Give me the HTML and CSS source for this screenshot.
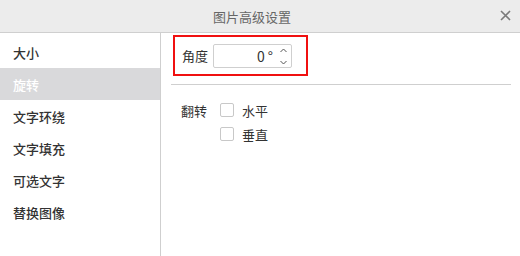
FILE: index.html
```html
<!DOCTYPE html>
<html lang="zh">
<head>
<meta charset="utf-8">
<link rel="stylesheet" href="styles.css">
</head>
<body>
<div class="dialog">
  <div class="header">
    <span class="title">图片高级设置</span>
    <span class="close"><svg width="11" height="11" viewBox="0 0 11 11"><path d="M1 1L10 10M10 1L1 10" stroke="#7a7a7a" stroke-width="1.6" fill="none"/></svg></span>
  </div>
  <div class="main">
    <ul class="nav">
      <li class="nav-item">大小</li>
      <li class="nav-item active">旋转</li>
      <li class="nav-item">文字环绕</li>
      <li class="nav-item">文字填充</li>
      <li class="nav-item">可选文字</li>
      <li class="nav-item">替换图像</li>
    </ul>
    <div class="content">
      <div class="angle-box">
        <span class="angle-label">角度</span>
        <div class="spin">
          <span class="spin-value">0 °</span>
          <span class="spin-arrows">
            <svg width="7" height="5" viewBox="0 0 7 5"><path d="M0.5 4L3.5 1L6.5 4" stroke="#555" stroke-width="1" fill="none"/></svg>
            <svg width="7" height="5" viewBox="0 0 7 5"><path d="M0.5 1L3.5 4L6.5 1" stroke="#555" stroke-width="1" fill="none"/></svg>
          </span>
        </div>
      </div>
      <div class="sep"></div>
      <div class="flip">
        <span class="flip-label">翻转</span>
        <div class="options">
          <label class="option"><span class="check"></span>水平</label>
          <label class="option"><span class="check"></span>垂直</label>
        </div>
      </div>
    </div>
  </div>
</div>
</body>
</html>
```
FILE: styles.css
```css
* { box-sizing: border-box; }
html, body { margin: 0; padding: 0; background: #fff; }
body {
  font-family: "Noto Sans CJK SC", "Noto Sans", sans-serif;
  color: #333;
  width: 520px;
  height: 256px;
  overflow: hidden;
}
.dialog { width: 520px; height: 256px; display: flex; flex-direction: column; }
.header {
  height: 33px;
  flex: none;
  background: #ececec;
  border-bottom: 1px solid #cfcfcf;
  display: flex;
  align-items: center;
  justify-content: center;
  position: relative;
  padding-right: 16px;
}
.title { font-size: 13px; color: #666; line-height: 1; }
.close {
  position: absolute;
  right: 9px;
  top: 10px;
  width: 11px;
  height: 11px;
  display: flex;
}
.main { flex: 1; display: flex; }
.nav {
  list-style: none;
  margin: 0;
  padding: 3px 0 0 0;
  width: 161px;
  flex: none;
  border-right: 1px solid #cfcfcf;
}
.nav-item {
  height: 32px;
  display: flex;
  align-items: center;
  padding-left: 13px;
  font-size: 13px;
  font-weight: 500;
  color: #333;
}
.nav-item.active { background: #d9d9db; color: #fff; }
.content { flex: 1; padding: 2px 9px 0 10px; display: flex; flex-direction: column; }
.angle-box {
  margin-left: 2px;
  width: 135px;
  height: 41px;
  border: 2px solid #f01010;
  display: flex;
  align-items: center;
  padding-left: 7px;
}
.angle-label { font-size: 13px; width: 31px; line-height: 1; }
.spin {
  width: 79px;
  height: 24px;
  border: 1px solid #cfcfcf;
  border-radius: 2px;
  display: flex;
  align-items: center;
  justify-content: flex-end;
  padding-right: 4px;
  margin-top: 1px;
}
.spin-value { font-size: 14px; color: #333; margin-right: 7px; line-height: 1; }
.spin-arrows { display: flex; flex-direction: column; gap: 7px; }
.spin-arrows svg { display: block; }
.sep { height: 1px; background: #cfcfcf; margin-top: 8px; }
.flip { display: flex; margin-top: 13px; padding-left: 10px; }
.flip-label { font-size: 13px; width: 39px; height: 24px; display: flex; align-items: center; }
.options { display: flex; flex-direction: column; }
.option {
  height: 24px;
  display: flex;
  align-items: center;
  font-size: 13px;
  color: #333;
}
.check {
  width: 14px;
  height: 14px;
  border: 1px solid #c8c8c8;
  border-radius: 2px;
  margin-right: 8px;
  background: #fff;
}
```
